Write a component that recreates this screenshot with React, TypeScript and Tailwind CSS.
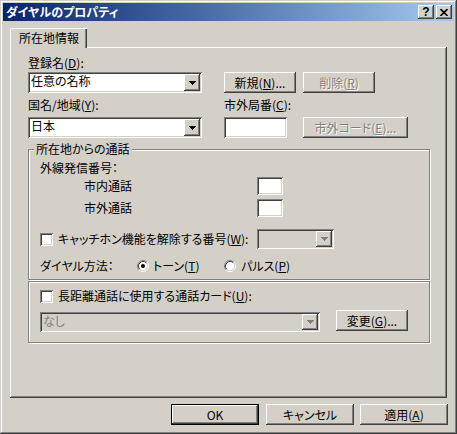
import React from "react";

// Win2000 classic bevels
const raised =
  "shadow-[inset_-1px_-1px_#404040,inset_1px_1px_#fff,inset_-2px_-2px_#808080,inset_2px_2px_#d4d0c8]";
const sunken =
  "shadow-[inset_1px_1px_#808080,inset_-1px_-1px_#fff,inset_2px_2px_#404040,inset_-2px_-2px_#d4d0c8]";
const etched = "border border-[#808080] shadow-[inset_1px_1px_#fff,1px_1px_#fff]";
const grayText = "text-[#808080] [text-shadow:1px_1px_0_#fff]";

const Arrow = ({ disabled }: { disabled?: boolean }) => (
  <svg width="7" height="4" viewBox="0 0 7 4">
    <g fill={disabled ? "#808080" : "#000"}>
      <rect x="0" y="0" width="7" height="1" />
      <rect x="1" y="1" width="5" height="1" />
      <rect x="2" y="2" width="3" height="1" />
      <rect x="3" y="3" width="1" height="1" />
    </g>
  </svg>
);

const Combo = ({
  text,
  width,
  height = "h-[21px]",
  disabled,
}: {
  text?: string;
  width: string;
  height?: string;
  disabled?: boolean;
}) => (
  <div className={`flex ${width} ${height} p-[2px] ${disabled ? "bg-[#d4d0c8]" : "bg-white"} ${sunken}`}>
    <span className={`flex-1 pl-[1px] ${disabled ? "text-[#808080]" : ""}`}>{text}</span>
    <div className={`flex w-[16px] items-center justify-center bg-[#d4d0c8] ${raised}`}>
      <Arrow disabled={disabled} />
    </div>
  </div>
);

const Button = ({
  children,
  width,
  disabled,
  isDefault,
}: {
  children: React.ReactNode;
  width: string;
  disabled?: boolean;
  isDefault?: boolean;
}) => (
  <div className={`${width} h-[21px] ${isDefault ? "border border-black" : ""}`}>
    <div
      className={`flex h-full w-full items-center justify-center bg-[#d4d0c8] ${raised} ${
        disabled ? grayText : ""
      }`}
    >
      {children}
    </div>
  </div>
);

const TextBox = ({ width, height }: { width: string; height: string }) => (
  <div className={`${width} ${height} bg-white ${sunken}`} />
);

const CheckBox = () => <div className={`h-[13px] w-[13px] bg-white ${sunken}`} />;

const Radio = ({ checked }: { checked?: boolean }) => (
  <svg width="12" height="12" viewBox="0 0 12 12">
    <circle cx="6" cy="6" r="4.5" fill="#fff" />
    <path d="M2.11 9.89 A5.5 5.5 0 0 1 9.89 2.11" fill="none" stroke="#808080" />
    <path d="M9.89 2.11 A5.5 5.5 0 0 1 2.11 9.89" fill="none" stroke="#fff" />
    <path d="M2.82 9.18 A4.5 4.5 0 0 1 9.18 2.82" fill="none" stroke="#404040" />
    <path d="M9.18 2.82 A4.5 4.5 0 0 1 2.82 9.18" fill="none" stroke="#d4d0c8" />
    {checked && <circle cx="6" cy="6" r="2" fill="#000" />}
  </svg>
);

export default function App() {
  return (
    <div
      className={`h-[434px] w-[457px] bg-[#d4d0c8] p-[3px] text-[12px] leading-[14px] text-black font-['Noto_Sans_CJK_JP','Noto_Sans_CJK_SC',sans-serif] [font-feature-settings:'palt'] shadow-[inset_-1px_-1px_#404040,inset_1px_1px_#d4d0c8,inset_-2px_-2px_#808080,inset_2px_2px_#fff]`}
    >
      {/* title bar */}
      <div className="flex h-[18px] items-center bg-linear-to-r from-[#0a246a] to-[#a6caf0]">
        <span className="pl-[3px] font-bold text-white">ダイヤルのプロパティ</span>
        <div className="ml-auto mr-[2px] flex gap-[2px]">
          <div className={`flex h-[14px] w-[16px] items-center justify-center bg-[#d4d0c8] ${raised}`}>
            <span className="font-['Liberation_Sans',sans-serif] text-[12px] font-bold leading-none">?</span>
          </div>
          <div className={`flex h-[14px] w-[16px] items-center justify-center bg-[#d4d0c8] ${raised}`}>
            <svg width="8" height="7" viewBox="0 0 8 7">
              <path d="M0.5 0 L7.5 7 M7.5 0 L0.5 7" stroke="#000" strokeWidth="1.6" />
            </svg>
          </div>
        </div>
      </div>

      <div className="px-[7px] pt-[7px]">
        {/* tab */}
        <div className="relative z-10 -mb-[1px] flex h-[20px] w-[77px] items-start justify-center rounded-tl-[2px] border-l border-t border-white bg-[#d4d0c8] pt-[2px] shadow-[inset_-1px_0_#404040,inset_-2px_0_#808080]">
          所在地情報
        </div>

        {/* tab panel */}
        <div className="h-[351px] w-[437px] pl-[18px] shadow-[inset_-1px_-1px_#404040,inset_1px_1px_#fff,inset_-2px_-2px_#808080]">
          <div className="pt-[9px]">
            <div className="h-[14px]">
              登録名(<u>D</u>):
            </div>
            <div className="mt-[2px] flex h-[21px]">
              <Combo text="任意の名称" width="w-[174px]" />
              <div className="ml-[22px]">
                <Button width="w-[72px]">
                  新規(<u>N</u>)...
                </Button>
              </div>
              <div className="ml-[7px]">
                <Button width="w-[72px]" disabled>
                  削除(<u>R</u>)
                </Button>
              </div>
            </div>

            <div className="mt-[5px] flex h-[14px]">
              <div className="w-[196px]">
                国名/地域(<u>Y</u>):
              </div>
              <div>
                市外局番(<u>C</u>):
              </div>
            </div>
            <div className="mt-[5px] flex h-[21px]">
              <Combo text="日本" width="w-[174px]" />
              <div className="ml-[22px]">
                <TextBox width="w-[63px]" height="h-[21px]" />
              </div>
              <div className="ml-[16px]">
                <Button width="w-[105px]" disabled>
                  市外コード(<u>E</u>)...
                </Button>
              </div>
            </div>

            {/* group: calls from this location */}
            <div className={`relative mt-[11px] h-[131px] w-[402px] ${etched}`}>
              <span className="absolute -top-[8px] left-[5px] bg-[#d4d0c8] px-[2px]">所在地からの通話</span>
              <div className="mt-[11px] h-[14px] pl-[11px]">外線発信番号：</div>
              <div className="mt-[2px] flex h-[18px] items-center pl-[55px]">
                <span className="w-[173px]">市内通話</span>
                <TextBox width="w-[26px]" height="h-[18px]" />
              </div>
              <div className="mt-[4px] flex h-[18px] items-center pl-[55px]">
                <span className="w-[173px]">市外通話</span>
                <TextBox width="w-[26px]" height="h-[18px]" />
              </div>
              <div className="mt-[12px] flex h-[20px] items-center pl-[11px]">
                <div className="flex w-[217px] items-center gap-[5px]">
                  <CheckBox />
                  <span>
                    キャッチホン機能を解除する番号(<u>W</u>):
                  </span>
                </div>
                <Combo width="w-[77px]" height="h-[20px]" disabled />
              </div>
              <div className="mt-[10px] flex h-[14px] items-center pl-[11px]">
                <span className="w-[97px]">ダイヤル方法：</span>
                <div className="flex w-[87px] items-center gap-[4px]">
                  <Radio checked />
                  <span>
                    トーン(<u>T</u>)
                  </span>
                </div>
                <div className="flex items-center gap-[5px]">
                  <Radio />
                  <span>
                    パルス(<u>P</u>)
                  </span>
                </div>
              </div>
            </div>

            {/* group: calling card */}
            <div className={`mt-[1px] h-[62px] w-[402px] ${etched}`}>
              <div className="mt-[7px] flex h-[14px] items-center gap-[5px] pl-[11px]">
                <CheckBox />
                <span>
                  長距離通話に使用する通話カード(<u>U</u>):
                </span>
              </div>
              <div className="mt-[7px] flex items-start pl-[11px]">
                <div className="mt-[2px]">
                  <Combo text="なし" width="w-[280px]" height="h-[20px]" disabled />
                </div>
                <div className="ml-[16px]">
                  <Button width="w-[72px]">
                    変更(<u>G</u>)...
                  </Button>
                </div>
              </div>
            </div>
          </div>
        </div>
      </div>

      {/* dialog buttons */}
      <div className="mt-[6px] flex justify-end pr-[6px]">
        <div className="mr-[7px]">
          <Button width="w-[88px]" isDefault>
            OK
          </Button>
        </div>
        <div className="mr-[6px]">
          <Button width="w-[88px]">キャンセル</Button>
        </div>
        <Button width="w-[88px]">
          適用(<u>A</u>)
        </Button>
      </div>
    </div>
  );
}
